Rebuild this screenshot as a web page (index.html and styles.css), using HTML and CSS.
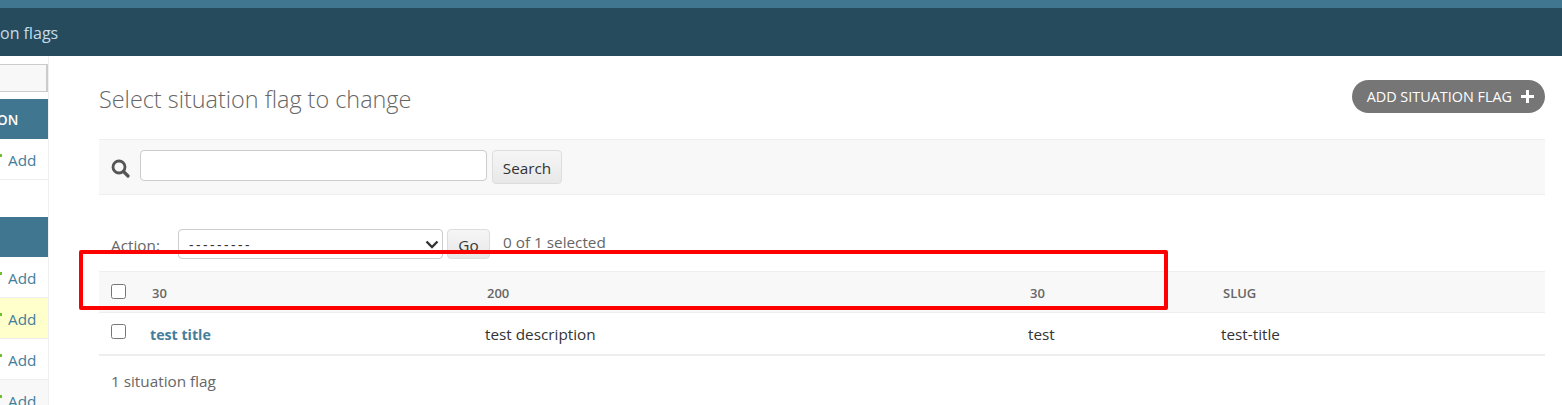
FILE: index.html
```html
<!DOCTYPE html>
<html lang="en">
<head>
    <meta charset="UTF-8">
    <title>Select situation flag to change</title>
    <link rel="stylesheet" href="styles.css">
</head>
<body>
    <div class="topbar"></div>
    <div class="breadcrumbs">on flags</div>

    <div class="page">
        <aside class="sidebar">
            <div class="nav-filter"></div>

            <div class="module-head">ON</div>
            <div class="nav-row"><span class="plus"></span><a>Add</a></div>
            <div class="nav-gap"></div>

            <div class="module-head"></div>
            <div class="nav-row"><span class="plus"></span><a>Add</a></div>
            <div class="nav-row current"><span class="plus"></span><a>Add</a></div>
            <div class="nav-row"><span class="plus"></span><a>Add</a></div>
            <div class="nav-row alt"><span class="plus"></span><a>Add</a></div>
        </aside>

        <main class="content">
            <div class="title-row">
                <h1>Select situation flag to change</h1>
                <a class="addlink">ADD SITUATION FLAG
                    <svg width="13" height="13" viewBox="0 0 13 13"><path d="M5 0h3v5h5v3H8v5H5V8H0V5h5z" fill="#fff"/></svg>
                </a>
            </div>

            <div class="toolbar">
                <svg class="search-icon" width="19" height="19" viewBox="0 0 19 19"><circle cx="8" cy="8" r="6" fill="none" stroke="#555" stroke-width="2.8"/><path d="M12.5 12.5L17 17" stroke="#555" stroke-width="3.2" stroke-linecap="round"/></svg>
                <input class="search-input" type="text">
                <button class="btn search-btn">Search</button>
            </div>

            <div class="actions">
                <label>Action:</label>
                <select class="action-select"><option>---------</option></select>
                <button class="btn go-btn">Go</button>
                <span class="counter">0 of 1 selected</span>
            </div>

            <table class="result-list">
                <thead>
                    <tr>
                        <th class="col-check"><input type="checkbox"></th>
                        <th class="col-title">30</th>
                        <th class="col-desc">200</th>
                        <th class="col-short">30</th>
                        <th>SLUG</th>
                    </tr>
                </thead>
                <tbody>
                    <tr>
                        <td class="col-check"><input type="checkbox"></td>
                        <td class="col-title"><a>test title</a></td>
                        <td class="col-desc">test description</td>
                        <td class="col-short">test</td>
                        <td>test-title</td>
                    </tr>
                </tbody>
            </table>

            <p class="paginator">1 situation flag</p>
        </main>
    </div>

    <!-- red annotation drawn over the screenshot -->
    <div class="annotation"></div>
</body>
</html>
```

FILE: styles.css
```css
html, body {
    height: 405px;
    overflow: hidden;
}

body {
    margin: 0;
    font-family: "Open Sans", sans-serif;
    font-size: 15.3px;
    color: #333;
    background-color: #fff;
}

.topbar {
    height: 8px;
    background-color: #417690;
}

.breadcrumbs {
    height: 48px;
    line-height: 51px;
    background-color: #264b5d;
    font-size: 16px;
    color: #c4dce8;
    white-space: nowrap;
}

.page {
    display: flex;
}

/* Sidebar, cut off by the left edge of the window */
.sidebar {
    width: 48px;
    height: 349px;
    flex-shrink: 0;
    padding-top: 8px;
    border-right: 1px solid #eee;
    overflow: hidden;
}

.nav-filter {
    height: 26px;
    margin-bottom: 7px;
    background-color: #f8f8f8;
    border-style: solid;
    border-color: #ccc;
    border-width: 1px 2px 1px 0;
}

.module-head {
    height: 40px;
    line-height: 42px;
    text-indent: -3px;
    background-color: #417690;
    color: #fff;
    font-size: 13.5px;
    font-weight: 600;
}

.nav-row {
    height: 40px;
    display: flex;
    align-items: center;
    gap: 6px;
    border-bottom: 1px solid #eee;
    color: #447e9b;
}

.nav-row a {
    padding-top: 2px;
}

.nav-gap {
    height: 37px;
}

.nav-row.current {
    background-color: #ffc;
}

.nav-row.alt {
    background-color: #f8f8f8;
}

.plus {
    width: 2px;
    height: 3px;
    margin-top: -8px;
    background-color: #70bf2b;
}

/* Main column */
.content {
    flex: 1;
    padding: 0 17px 0 50px;
    min-width: 0;
}

.title-row {
    display: flex;
    justify-content: space-between;
    align-items: flex-start;
    height: 83px;
}

h1 {
    margin: 26px 0 0;
    font-size: 23.4px;
    font-weight: 300;
    line-height: 34px;
    color: #666;
}

.addlink {
    margin-top: 24px;
    height: 33px;
    display: flex;
    align-items: center;
    gap: 9px;
    padding: 0 11px 0 15px;
    border-radius: 17px;
    background-color: #767676;
    color: #fff;
    font-size: 14.4px;
}

.toolbar {
    height: 54px;
    display: flex;
    align-items: flex-start;
    background-color: #f8f8f8;
    border-top: 1px solid #eee;
    border-bottom: 1px solid #eee;
}

.search-icon {
    margin: 19px 10px 0 12px;
}

.search-input {
    width: 347px;
    height: 31px;
    margin: 10px 5px 0 0;
    padding: 0;
    box-sizing: border-box;
    background-color: #fff;
    border: 1px solid #ccc;
    border-radius: 4px;
}

.btn {
    font-family: "Open Sans", sans-serif;
    font-size: 15.3px;
    color: #333;
    background: linear-gradient(#f6f6f6, #e8e8e8);
    border: 1px solid #ddd;
    border-radius: 4px;
    padding: 2px 0 0;
}

.search-btn {
    width: 70px;
    height: 34px;
    margin-top: 10px;
}

.actions {
    height: 76px;
    display: flex;
    align-items: flex-start;
    padding-left: 12px;
    box-sizing: border-box;
    color: #666;
}

.actions label {
    width: 67px;
    margin-top: 40px;
}

.action-select {
    width: 265px;
    height: 30px;
    margin-top: 34px;
    padding-left: 10px;
    appearance: none;
    font-family: "Open Sans", sans-serif;
    font-size: 14px;
    letter-spacing: 2.5px;
    color: #333;
    background: #fff url("data:image/svg+xml,%3Csvg xmlns='http://www.w3.org/2000/svg' width='14' height='9'%3E%3Cpath d='M1.5 1.5L7 7l5.5-5.5' fill='none' stroke='%23333' stroke-width='2.4'/%3E%3C/svg%3E") no-repeat right 3px center;
    border: 1px solid #ccc;
    border-radius: 4px;
}

.go-btn {
    width: 43px;
    height: 30px;
    margin: 34px 13px 0 4px;
}

.counter {
    margin-top: 37px;
}

.result-list {
    width: 100%;
    border-collapse: collapse;
    table-layout: fixed;
}

.result-list th {
    height: 41px;
    padding: 1px 0 0 2px;
    box-sizing: border-box;
    text-align: left;
    font-size: 13px;
    font-weight: 600;
    color: #666;
    background-color: #f8f8f8;
    border-top: 1px solid #eee;
    border-bottom: 1px solid #eee;
}

.result-list td {
    height: 42px;
    padding: 2px 0 0;
    box-sizing: border-box;
    color: #333;
    border-bottom: 2px solid #eee;
}

.result-list input {
    width: 15px;
    height: 15px;
    margin: 0 0 6px 12px;
    vertical-align: middle;
}

.result-list th input {
    margin: 0 0 4px 10px;
}

.col-check {
    width: 51px;
}

.col-title {
    width: 335px;
}

.col-desc {
    width: 543px;
}

.col-short {
    width: 193px;
}

.col-title a {
    color: #447e9b;
    font-size: 14.2px;
    font-weight: 700;
}

.paginator {
    margin: 15px 0 0 12px;
    color: #666;
}

.annotation {
    position: absolute;
    left: 79px;
    top: 250px;
    width: 1081px;
    height: 52px;
    border: 4px solid #f00;
    border-radius: 2px;
}
```
